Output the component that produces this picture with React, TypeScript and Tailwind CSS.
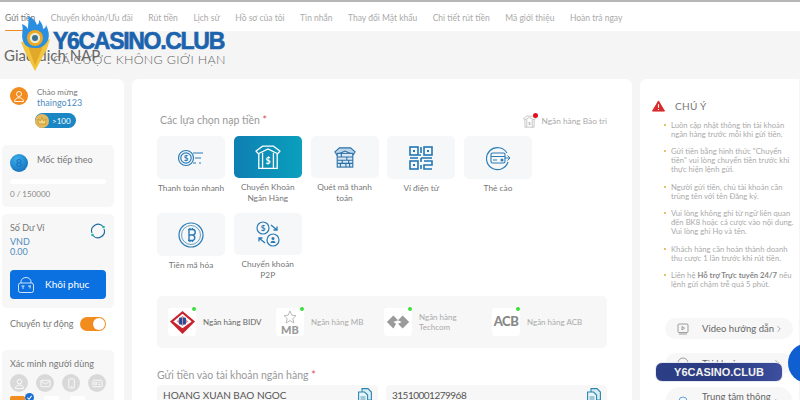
import type { ReactNode } from 'react';
import { ChevronRight } from 'lucide-react';

const NAV_ITEMS = [
  'Gửi tiền',
  'Chuyển khoản/Ưu đãi',
  'Rút tiền',
  'Lịch sử',
  'Hồ sơ của tôi',
  'Tin nhắn',
  'Thay đổi Mật khẩu',
  'Chi tiết rút tiền',
  'Mã giới thiệu',
  'Hoàn trả ngay',
];

const NOTES: ReactNode[] = [
  'Luôn cập nhật thông tin tài khoản ngân hàng trước mỗi khi gửi tiền.',
  'Gửi tiền bằng hình thức "Chuyển tiền" vui lòng chuyển tiền trước khi thực hiện lệnh gửi.',
  'Người gửi tiền, chủ tài khoản cần trùng tên với tên Đăng ký.',
  'Vui lòng không ghi từ ngữ liên quan đến BK8 hoặc cá cược vào nội dung. Vui lòng ghi Họ và tên.',
  'Khách hàng cần hoàn thành doanh thu cược 1 lần trước khi rút tiền.',
  <>
    Liên hệ <b className="font-bold text-[#888]">Hỗ trợ Trực tuyến 24/7</b> nếu lệnh gửi chậm trễ quá 5 phút.
  </>,
];

function FastIcon() {
  return (
    <svg viewBox="0 0 28 20" className="w-7 h-5" fill="none" stroke="#2b7bb5" strokeWidth="1.2">
      <circle cx="9" cy="10" r="7.5" />
      <circle cx="9" cy="10" r="5.2" />
      <text x="9" y="13" textAnchor="middle" fontSize="8" fontWeight="700" fill="#2b7bb5" stroke="none">$</text>
      <path d="M16 5h10M18 10h6M16 15h3M22 15h2" />
    </svg>
  );
}

function BankIcon({ color = '#ffffff', className = 'w-[26px] h-[26px]' }: { color?: string; className?: string }) {
  return (
    <svg viewBox="0 0 24 24" className={className} fill="none" stroke={color} strokeWidth="1.2">
      <path d="M1 6.500 7 2h10l6 4.500L21 9 12 4.500 3 9Z" />
      <path d="M3.500 8.500v14h17v-14M7 22.500V8M17 22.500V8" />
      <text x="12" y="18.500" textAnchor="middle" fontSize="8" fontWeight="700" fill={color} stroke="none">$</text>
    </svg>
  );
}

function StoreIcon() {
  return (
    <svg viewBox="0 0 24 24" className="w-[22px] h-[24px]" fill="none" stroke="#2b6fa8" strokeWidth="1.2">
      <path d="M1 6.500 6 2h12l5 4.500-2 3-9-4-9 4Z" fill="#bcd6ea" />
      <rect x="3.500" y="8" width="17" height="15" fill="#dbe9f4" />
      <path d="M3.500 12h17M3.500 15.500h17M3.500 19h17M8 8v4M14 12v3.500M9 15.500V19M16 15.500V19M7 19v4M13 19v4M17 19v4" />
    </svg>
  );
}

function QrIcon() {
  return (
    <svg viewBox="0 0 24 24" className="w-[26px] h-6" fill="none" stroke="#2277b5" strokeWidth="1.6">
      <rect x="1" y="1" width="8" height="8" />
      <rect x="15" y="1" width="8" height="8" />
      <rect x="1" y="15" width="8" height="8" />
      <path d="M12 1v6M12 9H9.500M1 12h8M12 12h11M12 12v4M15 15h8v4h-8v4h8M12 19v4" />
      <path d="M4 4h2v2H4zM18 4h2v2h-2zM4 18h2v2H4z" fill="#2277b5" stroke="none" />
    </svg>
  );
}

function CardIcon() {
  return (
    <svg viewBox="0 0 26 26" className="w-[26px] h-[26px]" fill="none" stroke="#2b7bb5" strokeWidth="1.100">
      <path d="M22 8A11 11 0 1 0 23 17" />
      <path d="M20 13h5l-2.500-2.500M25 13l-2.500 2.500" strokeWidth="1" />
      <rect x="6" y="8" width="14" height="10" rx="1.500" />
      <path d="M6 11.500h14M8 15h4" />
      <circle cx="17" cy="15" r="1" fill="#2b7bb5" />
    </svg>
  );
}

function CryptoIcon() {
  return (
    <svg viewBox="0 0 26 26" className="w-[26px] h-[26px]" fill="none" stroke="#2b7bb5" strokeWidth="1.200">
      <circle cx="13" cy="13" r="12" />
      <circle cx="13" cy="13" r="9.500" strokeWidth="0.700" />
      <path d="M10 7.500h4.500a2.700 2.700 0 0 1 0 5.500a2.800 2.800 0 0 1 0 5.500H10M11 7.500v11M11 13h3.500M12 6v1.500M14.500 6v1.500M12 18.500V20M14.500 18.500V20" strokeWidth="1.400" />
    </svg>
  );
}

function P2pIcon() {
  return (
    <svg viewBox="0 0 26 26" className="w-[26px] h-[26px]" fill="none" stroke="#2b7bb5" strokeWidth="1.200">
      <circle cx="8" cy="7" r="6" />
      <text x="8" y="10" textAnchor="middle" fontSize="8" fontWeight="700" fill="#2b7bb5" stroke="none">$</text>
      <circle cx="18" cy="19" r="6" />
      <circle cx="18" cy="17.500" r="1.500" fill="#2b7bb5" stroke="none" />
      <path d="M15.500 22c0-3 5-3 5 0z" fill="#2b7bb5" stroke="none" />
      <path d="M16 4l6 5M22 5.500V9h-3.500M10 22l-6-5M4 20.500V17h3.500" strokeWidth="1.300" />
    </svg>
  );
}

function CopyIcon() {
  return (
    <svg viewBox="0 0 14 16" className="w-[14px] h-4" fill="#d8edf5" stroke="#2b86ad" strokeWidth="1.100">
      <path d="M4 .6h6l3.400 3.400V12H4z" />
      <path d="M.6 4h6l3 3v8.400H.6z" fill="#e9f5fa" />
      <path d="M2.500 9h5M2.500 11h5M2.500 13h3" strokeWidth="0.800" />
    </svg>
  );
}

function FlameLogo() {
  return (
    <svg viewBox="0 0 30 55" className="w-[30px] h-[55px]">
      <path d="M0 26 L6 25 L23 25 L29 23 L26 33 L14 55 L4 36 Z" fill="#f2c53d" />
      <path d="M7 30 L14 50 L22 30 Z" fill="#e0a92c" />
      <path d="M3 27C-1 20 3 15 1 8c3 1 5 3 6 5 0-5 1-9 0-13 5 2 8 5 9 9 2-1 2-3 2-5 3 3 4 6 4 9 2-1 3-2 3-4 3 6 4 12 1 17-3 4-6 6-11 6C9 32 5 31 3 27Z" fill="#2a8fe0" />
      <circle cx="14" cy="22" r="8" fill="#efa81f" />
      <circle cx="14" cy="22" r="5.200" fill="#e9ecd8" />
      <circle cx="14" cy="22" r="3" fill="#40708f" />
    </svg>
  );
}

function VerifyDot({ children }: { children: ReactNode }) {
  return (
    <span className="w-[18px] h-[18px] rounded-full bg-[#d9d9d9] flex items-center justify-center text-white">
      {children}
    </span>
  );
}

function Tile({ label, active, children }: { label: ReactNode; active?: boolean; children: ReactNode }) {
  return (
    <div className="w-[68px] h-[68px] flex flex-col items-center">
      <div
        className={
          active
            ? 'w-[68px] h-[43px] rounded-[5px] flex items-center justify-center bg-gradient-to-r from-[#0f7fb2] to-[#0aa0bd]'
            : 'w-[68px] h-[43px] rounded-[5px] flex items-center justify-center bg-[#f6f7f8]'
        }
      >
        {children}
      </div>
      <div className="w-[80px] mt-[4px] text-center text-[8.3px] leading-[11px] text-[#777]">{label}</div>
    </div>
  );
}

function BankItem({ name, logo, muted }: { name: ReactNode; logo: ReactNode; muted?: boolean }) {
  return (
    <div className="w-[108px] flex items-center gap-[7px] shrink-0">
      <div className="relative w-[28px] h-[28px] bg-white rounded-[3px] flex items-center justify-center shrink-0">
        {logo}
        <span className="absolute -top-[1px] right-[0px] w-[4px] h-[4px] rounded-full bg-[#3be03b]" />
      </div>
      <span className={muted ? 'text-[8px] leading-[10px] text-[#aaa]' : 'text-[8px] leading-[10px] text-[#666]'}>{name}</span>
    </div>
  );
}

function AccountField({ value, tight }: { value: string; tight?: boolean }) {
  return (
    <div className="flex-1 h-[30px] bg-[#f7f7f7] rounded-[4px] pl-[6px] pr-[6px] flex items-start justify-between pt-[3px]">
      <span className={tight ? 'text-[10px] leading-[15px] tracking-[-0.5px] text-[#555]' : 'text-[10px] leading-[15px] text-[#555]'}>{value}</span>
      <CopyIcon />
    </div>
  );
}

function SidePill({ icon, children, className }: { icon: ReactNode; children: ReactNode; className: string }) {
  return (
    <div className={className}>
      <span className="w-[12px] flex justify-center shrink-0">{icon}</span>
      <span className="ml-[13px] text-[9.500px] leading-[11px] text-[#666] whitespace-nowrap">{children}</span>
      <ChevronRight className="ml-auto w-[10px] h-[10px] text-[#999] shrink-0" />
    </div>
  );
}

export default function App() {
  return (
    <div className="relative w-[800px] h-[400px] overflow-hidden bg-[#f5f5f5] font-['Lato','Noto_Sans',sans-serif]">
      <div className="h-[31px] bg-white border-t-2 border-[#b5b5b5] flex items-start gap-[15.500px] pl-[5px] text-[8.5px] text-[#aaa]">
        {NAV_ITEMS.map((item, i) => (
          <div
            key={item}
            className={i === 0 ? 'h-[29px] pt-[10px] border-b border-[#f08a24] text-[#777] whitespace-nowrap' : 'h-[29px] pt-[10px] whitespace-nowrap'}
          >
            {item}
          </div>
        ))}
      </div>

      <div className="h-[48px] pt-[15px] pl-[4px] text-[15px] leading-[18px] text-[#666]">Giao dịch NAP</div>

      <div className="flex gap-[8px]">
        <aside className="w-[124px] h-[330px] bg-white pl-[2px] pr-[10px] shrink-0 rounded-tr-[6px]">
          <div className="h-[66px] flex items-start pl-[8px] pt-[8px] gap-[9px]">
            <span className="w-[18px] h-[18px] rounded-full bg-[#f28c1e] flex items-center justify-center shrink-0">
              <svg viewBox="0 0 12 12" className="w-[12px] h-[12px]" fill="none" stroke="#fff" strokeWidth="0.900">
                <circle cx="6" cy="4" r="2.500" />
                <path d="M1.500 11.500c0-5 9-5 9 0z" />
              </svg>
            </span>
            <div>
              <div className="text-[8px] leading-[9px] text-[#777] mt-[1px]">Chào mừng</div>
              <div className="text-[9px] leading-[11px] text-[#4f8cc0]">thaingo123</div>
              <div className="mt-[5px] -ml-[2px] w-[41px] h-[15px] rounded-full bg-[#1a87c4] flex items-center">
                <span className="w-[14px] h-[14px] rounded-full bg-[#e5b85c] flex items-center justify-center">
                  <svg viewBox="0 0 10 10" className="w-[10px] h-[10px]" fill="#f5d67a" stroke="#a88530" strokeWidth="0.600">
                    <path d="M1.500 8 1 3l2.500 2L5 1.500 6.500 5 9 3l-.5 5z" />
                  </svg>
                </span>
                <span className="ml-[3px] text-[8px] text-white">&gt;100</span>
              </div>
            </div>
          </div>

          <section className="h-[62px] bg-[#f7f7f7] rounded-[5px] px-[8px] pt-[9px]">
            <div className="flex gap-[9px]">
              <span className="w-[18px] h-[18px] rounded-full bg-[radial-gradient(circle_at_40%_30%,#3bb0ec,#0b62b0)] shrink-0 flex items-center justify-center text-[11px] font-bold text-[#1c78c4]">8</span>
              <span className="mt-[1px] text-[9px] leading-[10px] text-[#777]">Mốc tiếp theo</span>
            </div>
            <div className="mt-[7px] h-[5px] bg-white rounded-full" />
            <div className="mt-[5px] text-[8px] leading-[10px] text-[#888]">0 / 150000</div>
          </section>

          <section className="mt-[7px] h-[94px] bg-[#f7f7f7] rounded-[5px] px-[8px] pt-[9px]">
            <div className="flex justify-between">
              <div>
                <div className="text-[9px] leading-[10px] text-[#777]">Số Dư Ví</div>
                <div className="mt-[4px] text-[9px] leading-[10px] text-[#4f8cc0]">VND</div>
                <div className="text-[9px] leading-[10px] text-[#4f8cc0]">0.00</div>
              </div>
              <svg viewBox="0 0 16 16" className="w-[16px] h-[16px]" fill="none" stroke="#1e6a9e" strokeWidth="1.100">
                <path d="M2 10A6.500 6.500 0 0 1 13 3.500M14 6A6.500 6.500 0 0 1 3 12.500" />
                <circle cx="13.500" cy="4" r="1.300" fill="#1fb5a5" stroke="none" />
                <circle cx="2.500" cy="12" r="1.300" fill="#1fb5a5" stroke="none" />
              </svg>
            </div>
            <button className="mt-[13px] w-full h-[29px] rounded-[4px] bg-[#0b70e0] text-white flex items-center pl-[7px] gap-[3px]">
              <svg viewBox="0 0 18 18" className="w-[18px] h-[18px] shrink-0" fill="none" stroke="#fff" strokeWidth="0.800">
                <path d="M4 7V5.500a5 4 0 0 1 10 0V7" />
                <rect x="1.500" y="7" width="15" height="9.500" rx="2" />
                <path d="M6 10v3M4.500 10h3M11 10h3M13 10v2.500" />
              </svg>
              <span className="text-[10px] ml-[7px]">Khôi phục</span>
            </button>
          </section>

          <div className="h-[42px] pl-[8px] pr-[8px] pt-[9px] flex items-start justify-between">
            <span className="text-[9px] leading-[14px] text-[#777]">Chuyển tự động</span>
            <span className="w-[26px] h-[14px] rounded-full bg-[#f28c1e] flex items-center justify-end pr-[1px]">
              <span className="w-[12px] h-[12px] rounded-full bg-white" />
            </span>
          </div>

          <section className="h-[60px] bg-[#f7f7f7] rounded-[5px] px-[8px] pt-[9px]">
            <div className="text-[9px] leading-[10px] text-[#777]">Xác minh người dùng</div>
            <div className="mt-[5px] flex justify-between">
              <VerifyDot>
                <svg viewBox="0 0 12 12" className="w-[11px] h-[11px]" fill="none" stroke="#fff" strokeWidth="0.900"><circle cx="6" cy="4" r="2.500" /><path d="M1.500 11.500c0-5 9-5 9 0z" /></svg>
              </VerifyDot>
              <VerifyDot>
                <svg viewBox="0 0 12 12" className="w-[11px] h-[11px]" fill="none" stroke="#fff" strokeWidth="0.900"><rect x="1" y="2.500" width="10" height="7" rx="1" /><path d="m1 3.500 5 3 5-3" /></svg>
              </VerifyDot>
              <VerifyDot>
                <svg viewBox="0 0 12 12" className="w-[11px] h-[11px]" fill="none" stroke="#fff" strokeWidth="0.900"><rect x="3" y="1" width="6" height="10" rx="1" /><path d="M5 9.500h2" /></svg>
              </VerifyDot>
              <VerifyDot>
                <svg viewBox="0 0 12 12" className="w-[11px] h-[11px]" fill="none" stroke="#fff" strokeWidth="0.900"><rect x="1" y="2.500" width="10" height="7" rx="1" /><path d="M3 5h2v2H3zM7 5h2M7 7h2" /></svg>
              </VerifyDot>
            </div>
            <div className="mt-[4px] flex gap-[11px]">
              <div className="relative w-[15px] h-[6px] bg-[#f28c1e] rounded-t-[2px]">
                <span className="absolute -top-[3px] -right-[9px] w-[9px] h-[9px] rounded-full bg-[#1a6fd0] flex items-center justify-center">
                  <svg viewBox="0 0 8 8" className="w-[7px] h-[7px]" fill="none" stroke="#fff" strokeWidth="1.200"><path d="m1.500 4 2 2 3-4" /></svg>
                </span>
              </div>
              <div className="ml-[8px] w-[15px] h-[6px] bg-white rounded-t-[2px]" />
              <div className="w-[15px] h-[6px] bg-white rounded-t-[2px]" />
            </div>
          </section>
        </aside>

        <main className="w-[500px] h-[330px] bg-white rounded-[6px] shrink-0 pl-[25px] pr-[25px] pt-[29px]">
          <div className="flex items-center justify-between h-[28px] pb-[2px]">
            <span className="pl-[3px] text-[10.5px] text-[#999]">Các lựa chọn nạp tiền <span className="text-[#e0525a]">*</span></span>
            <span className="flex items-center gap-[6px] text-[8.300px] text-[#aaa]">
              <span className="relative">
                <BankIcon color="#aaa" className="w-[13px] h-[13px]" />
                <span className="absolute -top-[2px] -right-[2px] w-[5px] h-[5px] rounded-full bg-[#e01020]" />
              </span>
              Ngân hàng Bảo trì
            </span>
          </div>

          <div className="grid grid-cols-[repeat(5,68px)] gap-x-[8.750px] gap-y-[9px]">
            <Tile label="Thanh toán nhanh"><FastIcon /></Tile>
            <Tile label={<>Chuyển Khoản<br />Ngân Hàng</>} active><BankIcon /></Tile>
            <Tile label={<>Quét mã thanh<br />toán</>}><StoreIcon /></Tile>
            <Tile label="Ví điện tử"><QrIcon /></Tile>
            <Tile label="Thẻ cào"><CardIcon /></Tile>
            <Tile label="Tiền mã hóa"><CryptoIcon /></Tile>
            <Tile label={<>Chuyển khoản<br />P2P</>}><P2pIcon /></Tile>
          </div>

          <div className="mt-[15px] h-[52px] bg-[#f7f7f7] rounded-[5px] pl-[11px] flex items-center">
            <BankItem
              name="Ngân hàng BIDV"
              logo={
                <svg viewBox="0 0 28 28" className="w-[27px] h-[27px]">
                  <path d="M14 2 27 13 14 26 1 13Z" fill="#c8232c" />
                  <path d="M14 5 23.500 13 14 20 4.500 13Z" fill="#fff" />
                  <path d="M14 7 20 13 14 17.500 8 13Z" fill="#d98a8e" />
                  <rect x="10.500" y="9" width="3" height="7" fill="#1f4e9c" />
                  <rect x="14.500" y="9" width="3" height="7" fill="#1f4e9c" />
                </svg>
              }
            />
            <BankItem
              muted
              name="Ngân hàng MB"
              logo={
                <div className="flex flex-col items-center">
                  <svg viewBox="0 0 14 14" className="w-[14px] h-[14px]" fill="none" stroke="#aaa" strokeWidth="0.800">
                    <path d="M7 1 8.800 5.200 13 5.600 9.800 8.500 10.800 13 7 10.600 3.200 13 4.200 8.500 1 5.600 5.200 5.200Z" />
                  </svg>
                  <span className="text-[11px] leading-[11px] font-black text-[#999]">MB</span>
                </div>
              }
            />
            <BankItem
              muted
              name={<>Ngân hàng<br />Techcom</>}
              logo={
                <svg viewBox="0 0 28 28" className="w-[26px] h-[26px]" fill="#9a9a9a">
                  <path d="M9 7 14 12 9 14 12 16 9 21 2 14Z" />
                  <path d="M19 7 26 14 19 21 14 16 18 14 14 12Z" />
                </svg>
              }
            />
            <BankItem
              muted
              name="Ngân hàng ACB"
              logo={<span className="text-[13px] font-black text-[#888] tracking-[-0.5px]">ACB</span>}
            />
          </div>

          <div className="mt-[20px] text-[10.5px] leading-[14px] text-[#999]">
            Gửi tiền vào tài khoản ngân hàng <span className="text-[#e0525a]">*</span>
          </div>
          <div className="mt-[3px] flex gap-[8px]">
            <AccountField value="HOANG XUAN BAO NGOC" />
            <AccountField value="31510001279968" tight />
          </div>
        </main>

        <aside className="w-[159px] h-[330px] bg-white rounded-l-[6px] shrink-0 pl-[12px] pr-[4px] pt-[20px]">
          <div className="flex items-center gap-[10px] h-[14px]">
            <svg viewBox="0 0 14 12" className="w-[13px] h-[12px]">
              <path d="M7 .5 13.500 11.500H.5Z" fill="#d92b2b" stroke="#d92b2b" strokeLinejoin="round" />
              <path d="M7 4v4M7 9.300v1" stroke="#fff" strokeWidth="1.200" />
            </svg>
            <span className="text-[10px] tracking-[0.3px] text-[#777]">CHÚ Ý</span>
          </div>
          <ul className="mt-[7.500px] pl-[19px] flex flex-col gap-[8.500px]">
            {NOTES.map((note, i) => (
              <li key={i} className="relative text-[7.700px] leading-[9px] text-[#aaa]">
                <span className="absolute -left-[7px] top-[3px] w-[2px] h-[2px] rounded-full bg-[#e3a83a]" />
                {note}
              </li>
            ))}
          </ul>
          <div className="mt-[29px] ml-[13px] mr-[2px] flex flex-col gap-[13.500px]">
            <SidePill
              className="h-[21px] rounded-full bg-[#f7f7f7] flex items-center pl-[12px] pr-[11px]"
              icon={
                <svg viewBox="0 0 12 12" className="w-[12px] h-[12px]" fill="none" stroke="#777" strokeWidth="0.700">
                  <rect x="1" y="1" width="10" height="8.500" rx="1" />
                  <path d="M5 3.500 7.500 5.200 5 7ZM2 11h8" />
                </svg>
              }
            >
              Video hướng dẫn
            </SidePill>
            <SidePill
              className="h-[21px] rounded-full bg-[#f7f7f7] flex items-center pl-[12px] pr-[11px]"
              icon={
                <svg viewBox="0 0 12 12" className="w-[12px] h-[12px]" fill="none" stroke="#777" strokeWidth="0.700">
                  <circle cx="6" cy="6" r="5" />
                </svg>
              }
            >
              Tài khoản
            </SidePill>
            <SidePill
              className="h-[30px] rounded-full bg-[#f7f7f7] flex items-center pl-[12px] pr-[11px]"
              icon={
                <svg viewBox="0 0 12 12" className="w-[12px] h-[12px]" fill="none" stroke="#3d8fd0" strokeWidth="0.800">
                  <path d="M2 11V5a4 4 0 0 1 8 0v6z" />
                </svg>
              }
            >
              Trung tâm thông<br />tin
            </SidePill>
          </div>
        </aside>
      </div>

      {/* watermark over the page */}
      <div className="absolute left-[21px] top-[16px] flex items-start">
        <FlameLogo />
        <div className="ml-[2px] mt-[13px]">
          <div className="text-[23px] leading-[24px] font-bold tracking-[-1.300px] text-[#1b63ad] [-webkit-text-stroke:0.6px_#1b63ad] font-['Liberation_Sans',sans-serif] whitespace-nowrap">Y6CASINO.CLUB</div>
          <div className="-mt-[1px] text-[12.500px] leading-[15px] tracking-[0.3px] text-[#666] font-light whitespace-nowrap">CÁ CƯỢC KHÔNG GIỚI HẠN</div>
        </div>
      </div>

      <div className="absolute left-[655px] top-[362px] w-[128px] h-[20px] rounded-[7px] border border-[#e8e8f5] bg-gradient-to-r from-[#2c3f86] via-[#2a3a80] to-[#3c4f9e] flex items-center justify-center text-[11px] font-bold text-[#f2f2f2] font-['Liberation_Sans',sans-serif]">
        Y6CASINO.CLUB
      </div>
      <div className="absolute left-[788px] top-[343px] w-[40px] h-[40px] rounded-full bg-[#0f5fd0]" />
    </div>
  );
}
